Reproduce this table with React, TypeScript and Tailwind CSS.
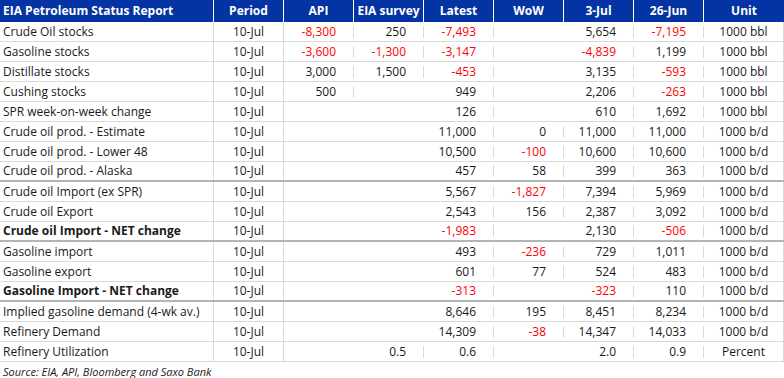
type Row = {
  label: string;
  bold?: boolean;
  thick?: boolean;
  api?: string;
  eia?: string;
  latest?: string;
  wow?: string;
  jul3?: string;
  jun26?: string;
  unit: string;
};

const rows: Row[] = [
  { label: "Crude Oil stocks", api: "-8,300", eia: "250", latest: "-7,493", jul3: "5,654", jun26: "-7,195", unit: "1000 bbl" },
  { label: "Gasoline stocks", api: "-3,600", eia: "-1,300", latest: "-3,147", jul3: "-4,839", jun26: "1,199", unit: "1000 bbl" },
  { label: "Distillate stocks", api: "3,000", eia: "1,500", latest: "-453", jul3: "3,135", jun26: "-593", unit: "1000 bbl" },
  { label: "Cushing stocks", api: "500", latest: "949", jul3: "2,206", jun26: "-263", unit: "1000 bbl" },
  { label: "SPR week-on-week change", latest: "126", jul3: "610", jun26: "1,692", unit: "1000 bbl" },
  { label: "Crude oil prod. - Estimate", latest: "11,000", wow: "0", jul3: "11,000", jun26: "11,000", unit: "1000 b/d" },
  { label: "Crude oil prod. - Lower 48", latest: "10,500", wow: "-100", jul3: "10,600", jun26: "10,600", unit: "1000 b/d" },
  { label: "Crude oil prod. - Alaska", thick: true, latest: "457", wow: "58", jul3: "399", jun26: "363", unit: "1000 b/d" },
  { label: "Crude oil Import (ex SPR)", latest: "5,567", wow: "-1,827", jul3: "7,394", jun26: "5,969", unit: "1000 b/d" },
  { label: "Crude oil Export", latest: "2,543", wow: "156", jul3: "2,387", jun26: "3,092", unit: "1000 b/d" },
  { label: "Crude oil Import - NET change", bold: true, thick: true, latest: "-1,983", jul3: "2,130", jun26: "-506", unit: "1000 b/d" },
  { label: "Gasoline import", latest: "493", wow: "-236", jul3: "729", jun26: "1,011", unit: "1000 b/d" },
  { label: "Gasoline export", latest: "601", wow: "77", jul3: "524", jun26: "483", unit: "1000 b/d" },
  { label: "Gasoline Import - NET change", bold: true, thick: true, latest: "-313", jul3: "-323", jun26: "110", unit: "1000 b/d" },
  { label: "Implied gasoline demand (4-wk av.)", latest: "8,646", wow: "195", jul3: "8,451", jun26: "8,234", unit: "1000 b/d" },
  { label: "Refinery Demand", latest: "14,309", wow: "-38", jul3: "14,347", jun26: "14,033", unit: "1000 b/d" },
  { label: "Refinery Utilization", eia: "0.5", latest: "0.6", jul3: "2.0", jun26: "0.9", unit: "Percent" },
];

const Num = ({ v }: { v?: string }) => (
  <div
    className={`w-[70px] shrink-0 border-r border-[#d9d9d9] pr-[17px] text-right ${
      v && v.startsWith("-") ? "text-[#ff0000]" : "text-[#1a1a1a]"
    }`}
  >
    {v}
  </div>
);

export default function App() {
  return (
    <div className="w-[784px] h-[378px] bg-white font-['Open_Sans',sans-serif] text-[12px] leading-none">
      <div className="flex h-[22px] items-center bg-[#0433a3] font-bold text-white text-[12px]">
        <div className="w-[214px] shrink-0 h-full flex items-center border-r border-white pl-[3px]">
          EIA Petroleum Status Report
        </div>
        <div className="w-[70px] shrink-0 h-full flex items-center justify-center border-r border-white">Period</div>
        <div className="w-[70px] shrink-0 h-full flex items-center justify-center border-r border-white">API</div>
        <div className="w-[70px] shrink-0 h-full flex items-center justify-center border-r border-white">EIA survey</div>
        <div className="w-[70px] shrink-0 h-full flex items-center justify-center border-r border-white">Latest</div>
        <div className="w-[70px] shrink-0 h-full flex items-center justify-center border-r border-white">WoW</div>
        <div className="w-[70px] shrink-0 h-full flex items-center justify-center border-r border-white">3-Jul</div>
        <div className="w-[70px] shrink-0 h-full flex items-center justify-center border-r border-white">26-Jun</div>
        <div className="w-[80px] shrink-0 h-full flex items-center justify-center">Unit</div>
      </div>
      {rows.map((r) => (
        <div
          key={r.label}
          className={`flex h-[20px] items-stretch ${
            r.thick ? "border-b-2 border-[#b4b4b4]" : "border-b border-[#d9d9d9]"
          }`}
        >
          <div
            className={`w-[214px] shrink-0 flex items-center border-r border-[#d9d9d9] pl-[3px] text-[#1a1a1a] ${
              r.bold ? "font-bold" : ""
            }`}
          >
            {r.label}
          </div>
          <div className="w-[70px] shrink-0 flex items-center justify-center border-r border-[#d9d9d9] text-[#1a1a1a]">
            10-Jul
          </div>
          {[r.api, r.eia, r.latest, r.wow, r.jul3, r.jun26].map((v, i) => (
            <div key={i} className="flex items-center">
              <Num v={v} />
            </div>
          ))}
          <div className="w-[80px] shrink-0 flex items-center justify-center border-r border-[#d9d9d9] text-[#1a1a1a]">
            {r.unit}
          </div>
        </div>
      ))}
      <div className="pl-[3px] pt-[4px] italic text-[11px] text-[#1a1a1a]">Source: EIA, API, Bloomberg and Saxo Bank</div>
    </div>
  );
}
